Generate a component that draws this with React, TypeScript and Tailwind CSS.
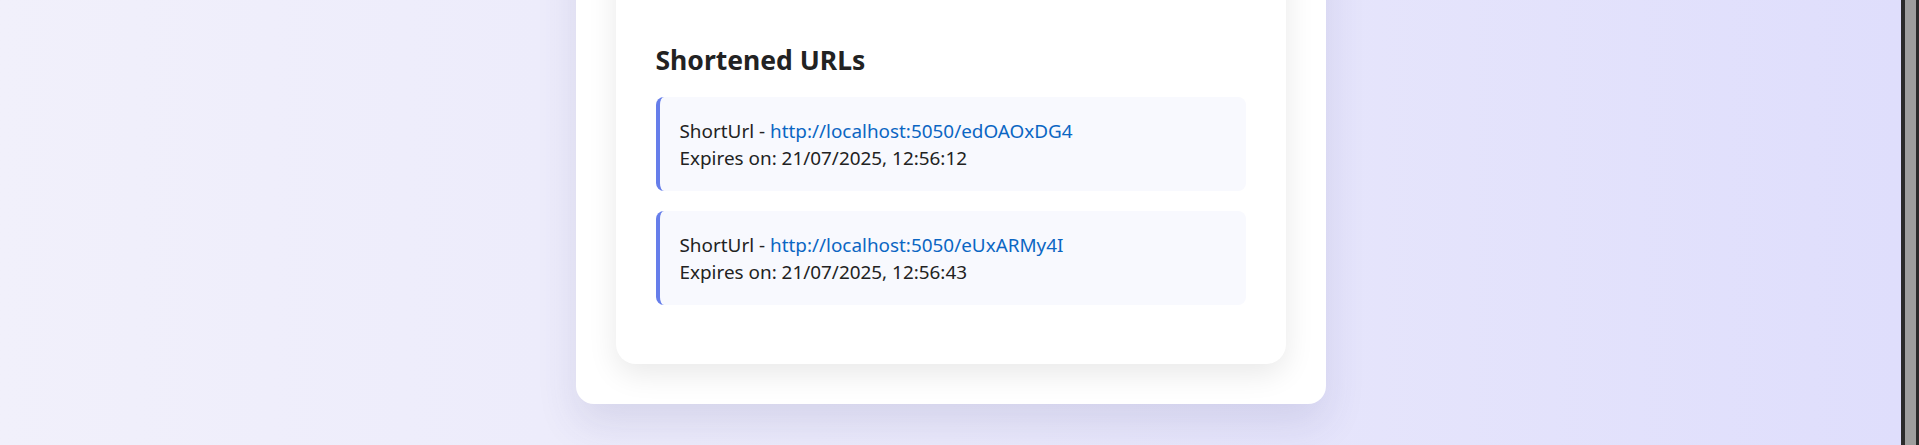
import React from "react";

const items = [
  { url: "http://localhost:5050/edOAOxDG4", expires: "21/07/2025, 12:56:12" },
  { url: "http://localhost:5050/eUxARMy4I", expires: "21/07/2025, 12:56:43" },
];

export default function App() {
  return (
    <div
      className="flex h-[445px] w-full overflow-hidden"
      style={{ fontFamily: '"Noto Sans", "Open Sans", sans-serif' }}
    >
      <main className="flex h-full flex-1 flex-col items-center justify-end overflow-hidden bg-linear-to-r from-[#f1f0fb] via-[#eae9fb] to-[#dfdefc] pb-[41px]">
        <div className="w-[750px] rounded-[18px] bg-white px-10 pb-10 pt-10 shadow-[0_20px_40px_rgba(60,60,120,0.12)]">
          <div className="rounded-[20px] bg-white px-10 pb-[59px] pt-10 shadow-[0_10px_30px_rgba(0,0,0,0.09)]">
            <div className="h-[80px]" />
            <h2 className="mb-[17px] text-[26.5px] font-bold leading-[40px] text-[#222]">
              Shortened URLs
            </h2>
            <ul className="flex flex-col gap-5">
              {items.map((it) => (
                <li
                  key={it.url}
                  className="rounded-lg border-l-4 border-[#667eea] bg-[#f8f9fe] px-5 pb-[19px] pt-[21px] text-[18.9px] leading-[27px] text-[#222]"
                >
                  <div>
                    ShortUrl -{" "}
                    <a href="#" className="text-[#0b66c3]">
                      {it.url}
                    </a>
                  </div>
                  <div>Expires on: {it.expires}</div>
                </li>
              ))}
            </ul>
          </div>
        </div>
      </main>
      <div className="flex h-full w-[18px] shrink-0 bg-[#2b2b2b] pl-[4px] pr-[3px]">
        <div className="h-full w-full bg-[#9e9e9e]" />
      </div>
    </div>
  );
}
